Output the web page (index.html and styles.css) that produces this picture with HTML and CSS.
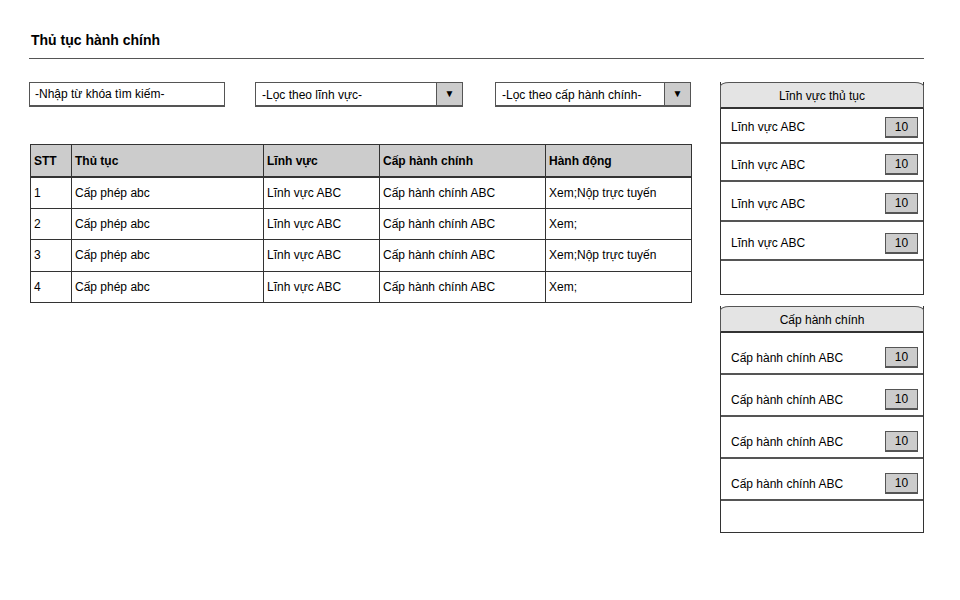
FILE: index.html
```html
<!DOCTYPE html>
<html lang="vi">
<head>
  <meta charset="UTF-8"/>
  <title>Thủ tục hành chính</title>
  <link rel="stylesheet" href="styles.css">
</head>
<body>
  <div class="page">
    <h1 class="title">Thủ tục hành chính</h1>

    <div class="content">
      <div class="main">
        <div class="filters">
          <div class="input search">-Nhập từ khóa tìm kiếm-</div>
          <div class="select sel-field">
            <span class="select-text">-Lọc theo lĩnh vực-</span>
            <span class="select-btn">▼</span>
          </div>
          <div class="select sel-level">
            <span class="select-text">-Lọc theo cấp hành chính-</span>
            <span class="select-btn">▼</span>
          </div>
        </div>

        <table class="grid">
          <thead>
            <tr>
              <th class="c-stt">STT</th>
              <th class="c-name">Thủ tục</th>
              <th class="c-field">Lĩnh vực</th>
              <th class="c-level">Cấp hành chính</th>
              <th class="c-act">Hành động</th>
            </tr>
          </thead>
          <tbody>
            <tr><td>1</td><td>Cấp phép abc</td><td>Lĩnh vực ABC</td><td>Cấp hành chính ABC</td><td>Xem;Nộp trực tuyến</td></tr>
            <tr><td>2</td><td>Cấp phép abc</td><td>Lĩnh vực ABC</td><td>Cấp hành chính ABC</td><td>Xem;</td></tr>
            <tr><td>3</td><td>Cấp phép abc</td><td>Lĩnh vực ABC</td><td>Cấp hành chính ABC</td><td>Xem;Nộp trực tuyến</td></tr>
            <tr><td>4</td><td>Cấp phép abc</td><td>Lĩnh vực ABC</td><td>Cấp hành chính ABC</td><td>Xem;</td></tr>
          </tbody>
        </table>
      </div>

      <div class="side">
        <div class="panel panel-field">
          <div class="panel-head">Lĩnh vực thủ tục</div>
          <div class="panel-row"><span>Lĩnh vực ABC</span><span class="badge">10</span></div>
          <div class="panel-row"><span>Lĩnh vực ABC</span><span class="badge">10</span></div>
          <div class="panel-row"><span>Lĩnh vực ABC</span><span class="badge">10</span></div>
          <div class="panel-row"><span>Lĩnh vực ABC</span><span class="badge">10</span></div>
          <div class="panel-row empty"></div>
        </div>

        <div class="panel panel-level">
          <div class="panel-head">Cấp hành chính</div>
          <div class="panel-row"><span>Cấp hành chính ABC</span><span class="badge">10</span></div>
          <div class="panel-row"><span>Cấp hành chính ABC</span><span class="badge">10</span></div>
          <div class="panel-row"><span>Cấp hành chính ABC</span><span class="badge">10</span></div>
          <div class="panel-row"><span>Cấp hành chính ABC</span><span class="badge">10</span></div>
          <div class="panel-row empty"></div>
        </div>
      </div>
    </div>
  </div>
</body>
</html>
```

FILE: styles.css
```css
* {
  margin: 0;
  padding: 0;
  box-sizing: border-box;
}

body {
  background: #fff;
  color: #000;
  font-family: 'Liberation Sans', Arial, sans-serif;
  font-size: 12px;
}

.page {
  width: 960px;
  padding: 0 36px 0 29px;
}

.title {
  font-size: 14px;
  font-weight: bold;
  padding: 32px 0 0 2px;
  height: 59px;
  border-bottom: 1px solid #555;
}

.content {
  display: flex;
  gap: 29px;
  margin-top: 23px;
}

.main {
  width: 662px;
}

/* filters */
.filters {
  display: flex;
  height: 25px;
}

.input,
.select {
  border: 1px solid #555;
  border-bottom-width: 2px;
  height: 25px;
  background: #fff;
}

.input {
  width: 196px;
  padding: 4px 0 0 5px;
}

.select {
  display: flex;
}

.sel-field {
  width: 208px;
  margin-left: 30px;
}

.sel-level {
  width: 196px;
  margin-left: 32px;
}

.select-text {
  flex: 1;
  padding: 5px 0 0 6px;
}

.select-btn {
  width: 26px;
  background: #ccc;
  border-left: 1px solid #555;
  font-size: 10px;
  text-align: center;
  padding-top: 5px;
}

/* table */
.grid {
  width: 662px;
  margin-top: 37px;
  margin-left: 1px;
  border-collapse: collapse;
  table-layout: fixed;
}

.grid th,
.grid td {
  border: 1px solid #333;
  text-align: left;
  padding: 0 3px;
  white-space: nowrap;
}

.grid th {
  background: #ccc;
  height: 32px;
  padding-top: 2px;
  font-weight: bold;
  border-bottom: 2px solid #333;
}

.grid td {
  height: 31.5px;
}

.c-stt { width: 41px; }
.c-name { width: 192px; }
.c-field { width: 116px; }
.c-level { width: 166px; }

/* side panels */
.side {
  width: 205px;
  display: flex;
  flex-direction: column;
  gap: 11px;
}

.panel {
  border-left: 1px solid #333;
  border-right: 1px solid #333;
  border-bottom: 1px solid #333;
}

.panel-head {
  height: 27px;
  background: #e4e4e4;
  border: 1px solid #555;
  border-bottom: 2px solid #333;
  border-radius: 9px 9px 0 0 / 4px 4px 0 0;
  margin: 0 -1px;
  text-align: center;
  padding-top: 6px;
}

.panel-row {
  display: flex;
  align-items: center;
  justify-content: space-between;
  padding: 5px 5px 0 10px;
  border-bottom: 2px solid #555;
}

.panel-row.empty {
  border-bottom: none;
}

.panel-field .panel-row:nth-child(2) { height: 35px; padding-top: 3px; }
.panel-field .panel-row:nth-child(3) { height: 38px; }
.panel-field .panel-row:nth-child(4) { height: 40px; }
.panel-field .panel-row:nth-child(5) { height: 39px; }
.panel-field .panel-row.empty { height: 33px; }

.panel-level .panel-row {
  height: 42px;
  padding-top: 9px;
}
.panel-level .panel-row.empty { height: 31px; }

.badge {
  width: 33px;
  height: 21px;
  background: #ccc;
  border: 1px solid #555;
  border-bottom-width: 2px;
  text-align: center;
  line-height: 18px;
}
```
